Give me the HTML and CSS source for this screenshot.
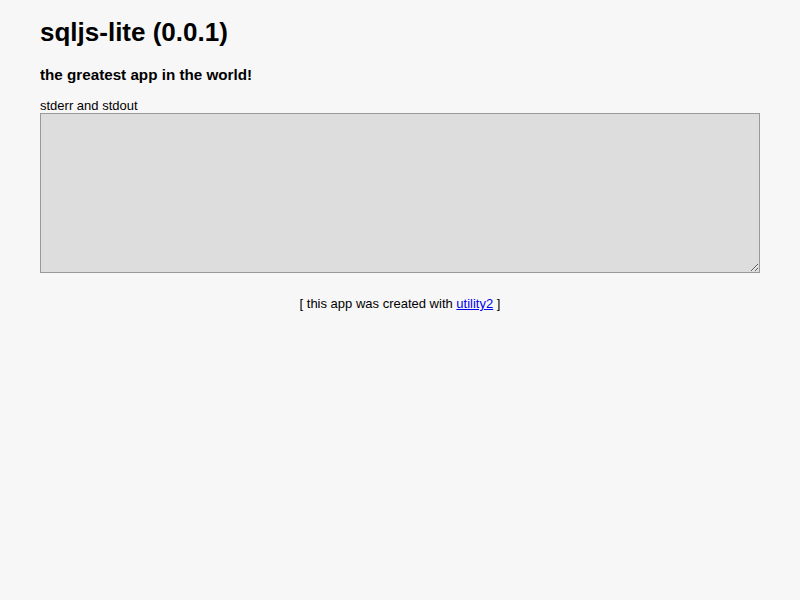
FILE: index.html
```html
<!DOCTYPE html>
<html>
<head>
<meta charset="utf-8">
<title>sqljs-lite (0.0.1)</title>
<link rel="stylesheet" href="styles.css">
</head>
<body>
<h1>sqljs-lite (0.0.1)</h1>
<h3>the greatest app in the world!</h3>
<label class="label">stderr and stdout</label>
<textarea class="output" readonly></textarea>
<div class="footer">[ this app was created with <a href="#">utility2</a> ]</div>
</body>
</html>
```
FILE: styles.css
```css
body {
  background: #f7f7f7;
  font-family: "Liberation Sans", Arial, Helvetica, sans-serif;
  font-size: 13px;
  margin: 0 40px;
  color: #000;
}
h1 {
  font-size: 26px;
  margin: 17px 0 18px;
}
h3 {
  font-size: 15.21px;
  margin: 15px 0;
}
.label {
  display: block;
}
.output {
  display: block;
  box-sizing: border-box;
  width: 100%;
  height: 160px;
  background: #ddd;
  border: 1px solid #999;
  font-family: "Liberation Mono", monospace;
  margin: 0;
}
.footer {
  text-align: center;
  margin-top: 23px;
  color: #000;
}
.footer a {
  color: #00e;
}
```
